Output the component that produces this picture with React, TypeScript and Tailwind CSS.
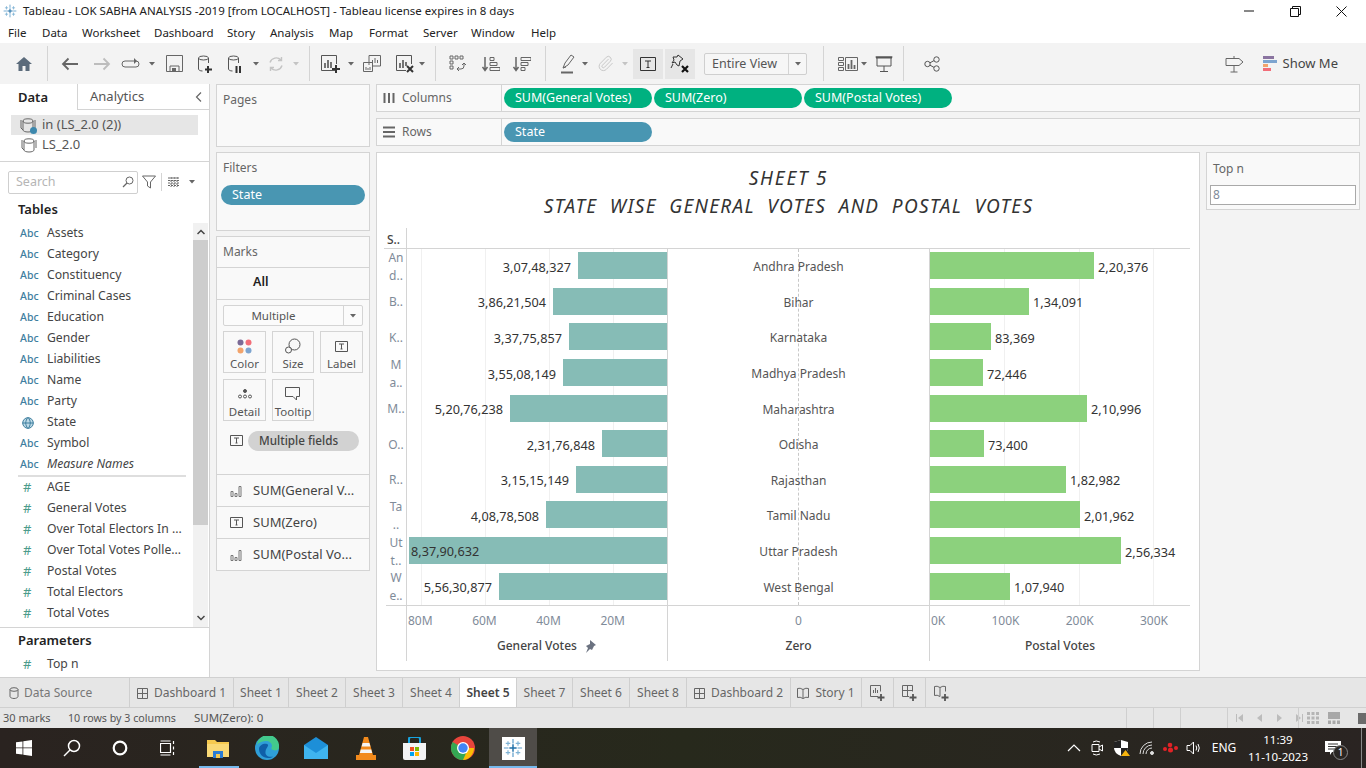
import React from "react";
import { Paperclip } from "lucide-react";

const S = ({ w = 20, h = 20, vb, children, c = "" }: { w?: number; h?: number; vb?: string; children: React.ReactNode; c?: string }) => (
  <svg width={w} height={h} viewBox={vb ?? `0 0 ${w} ${h}`} fill="none" stroke="currentColor" className={"shrink-0 " + c}>{children}</svg>
);

const Logo = ({ size = 14 }: { size?: number }) => (
  <svg width={size} height={size} viewBox="0 0 22 22" className="shrink-0" fill="none" strokeWidth="1.3">
    <path d="M11 1v5M11 16v5M1 11h5M16 11h5" stroke="#5a9bc9" />
    <path d="M11 7v8M7 11h8" stroke="#1f6fa8" strokeWidth="1.6" />
    <path d="M5.500 3.500v5M3 6h5M16.500 3.500v5M14 6h5M5.500 13.500v5M3 16h5M16.500 13.500v5M14 16h5" stroke="#7fb3d5" />
  </svg>
);

const Caret = ({ light }: { light?: boolean }) => (
  <svg width="6" height="4" viewBox="0 0 6 4" className="shrink-0"><path d="M0 0h6L3 3.500z" fill={light ? "#c4c4c4" : "#666"} /></svg>
);

const Slot = ({ w, children, c = "" }: { w: number; children?: React.ReactNode; c?: string }) => (
  <div style={{ width: w }} className={"flex items-center justify-center shrink-0 " + c}>{children}</div>
);
const Div = () => <div className="w-px h-[35px] bg-[#d4d4d4] shrink-0" />;

const Cyl = ({ children }: { children?: React.ReactNode }) => (
  <S w={18} h={20} c="text-[#555]">
    <ellipse cx="6.500" cy="4" rx="5" ry="2" />
    <path d="M1.500 4v11c0 1 1.500 2 4 2M11.500 4v5" />
    {children}
  </S>
);

const Toolbar = () => (
  <div className="h-[41px] bg-[#f3f3f3] flex items-center shrink-0 text-[#666]">
    <Slot w={47}><S w={18} h={16}><path d="M9 1L1 8h2.500v7h4v-5h3v5h4V8H17z" fill="#5b6b7b" stroke="none" /></S></Slot>
    <Div />
    <Slot w={44}><S w={18} h={14} c="text-[#666]"><path d="M17 7H2M7.500 1.500L2 7l5.500 5.500" strokeWidth="1.800" /></S></Slot>
    <Slot w={20}><S w={18} h={14} c="text-[#bdbdbd]"><path d="M1 7h15M10.500 1.500L16 7l-5.500 5.500" strokeWidth="1.800" /></S></Slot>
    <Slot w={37}><S w={20} h={12} c="text-[#666]"><path d="M13 3H4Q1 3 1 6t3 3h11q3 0 3-3t-3-3" /><path d="M13 0v6l3-3z" fill="#666" stroke="none" /></S></Slot>
    <Slot w={6}><Caret /></Slot>
    <Slot w={38}><S w={17} h={17}><path d="M.500.500h16v16H.500z" /><path d="M4 16v-5h9v5" /><path d="M6 13h4v3H6z" fill="#666" stroke="none" /></S></Slot>
    <Slot w={26}><Cyl><path d="M11 12v7M8 15.500h7" stroke="#333" strokeWidth="2" /></Cyl></Slot>
    <Slot w={34}><Cyl><path d="M9.500 12v7M13 12v7" stroke="#333" strokeWidth="2" /></Cyl></Slot>
    <Slot w={6}><Caret /></Slot>
    <Slot w={34}><S w={16} h={16} c="text-[#c4c4c4]"><path d="M2 6.500A6.500 6.500 0 0 1 13 4M14 9.500A6.500 6.500 0 0 1 3 12M13.500 1v3.500H10M2.500 15v-3.500H6" strokeWidth="1.400" /></S></Slot>
    <Slot w={6}><Caret light /></Slot>
    <Slot w={10} />
    <Div />
    <Slot w={38} c="pl-1"><S w={20} h={18} c="text-[#555]"><path d="M14 15.500H.500V.500h15V9" /><path d="M4 13V8M7 13V5M10 13V7" strokeWidth="1.600" /><path d="M15 10v8M11 14h8" stroke="#333" strokeWidth="2" /></S></Slot>
    <Slot w={6}><Caret /></Slot>
    <Slot w={36}><S w={18} h={18} c="text-[#666]"><path d="M6 10V.500h11.500V11H9" /><path d="M9.500 8V5M12 8V3M14.500 8V5" /><path d="M.500 7.500h9v9h-9zM3 15v-3M5 15v-2M7 15v-3" /></S></Slot>
    <Slot w={29}><S w={18} h={18} c="text-[#555]"><path d="M10 15.500H.500V.500h15V9" /><path d="M4 13V8M7 13V5M10 11V7" strokeWidth="1.600" /><path d="M11 11l6 6M17 11l-6 6" stroke="#333" strokeWidth="2" /></S></Slot>
    <Slot w={6}><Caret /></Slot>
    <Slot w={10} />
    <Div />
    <Slot w={43}><S w={18} h={18} c="text-[#666]"><path d="M1 1h3v3H1zM6 1h3v3H6zM11 1h3v3h-3zM1 6h3v3H1zM1 11h3v3H1z" /><path d="M15 8v3a3 3 0 0 1-3 3H8M10 12l-2 2 2 2M13 10l2-2 2 2" /></S></Slot>
    <Slot w={23}><S w={18} h={16} c="text-[#666]"><path d="M3 1v13M.500 11L3 14.500 5.500 11" strokeWidth="1.500" /><path d="M8 1.500h4v3H8zM8 6.500h7v3H8zM8 11.500h10v3H8z" /></S></Slot>
    <Slot w={40}><S w={18} h={16} c="text-[#666]"><path d="M3 1v13M.500 11L3 14.500 5.500 11" strokeWidth="1.500" /><path d="M8 1.500h10v3H8zM8 6.500h7v3H8zM8 11.500h4v3H8z" /></S></Slot>
    <Slot w={3} />
    <Slot w={1}><Div /></Slot>
    <Slot w={44}><S w={14} h={20} c="text-[#666]"><path d="M2 14L4 9l6-8 3 2-6 8zM2 14l3-1" /><path d="M0 18.500h12" strokeWidth="2" /></S></Slot>
    <Slot w={6} c="-ml-[8px]"><Caret /></Slot>
    <Slot w={34}><Paperclip size={17} strokeWidth={1.3} className="text-[#c4c4c4]" /></Slot>
    <Slot w={6}><Caret light /></Slot>
    <div className="w-[30px] h-[30px] bg-[#e6e6e6] ml-[5px] flex items-center justify-center shrink-0">
      <S w={16} h={14} c="text-[#333]"><path d="M.500.500h15v13H.500z" /><path d="M5 4h6M8 4v6.500M6.500 10.500h3" /></S>
    </div>
    <div className="w-[30px] h-[30px] bg-[#e6e6e6] ml-[2px] flex items-center justify-center shrink-0">
      <S w={20} h={20} c="text-[#333]"><path d="M8 1l5 4-3 2-1 5-2-1-2-3-3 1 2-3-1-3 4 0zM3 10L1 14" /><path d="M12 12l6 6M18 12l-6 6" stroke="#111" strokeWidth="2.200" /></S>
    </div>
    <div className="w-[103px] h-[22px] ml-[9px] border border-[#cfcfcf] rounded-[2px] bg-[#f6f6f6] flex items-center shrink-0">
      <span className="w-[84px] pl-[7px] text-[12.500px] text-[#555] border-r border-[#d4d4d4] leading-[20px]">Entire View</span>
      <span className="flex-1 flex justify-center"><Caret /></span>
    </div>
    <Slot w={16} />
    <Div />
    <Slot w={39} c="pl-[8px]"><S w={20} h={14} c="text-[#666]"><path d="M.500.500h5v3h-5zM.500 5.500h5v3h-5zM.500 10.500h5v3h-5zM7.500.500h12v13h-12z" /><path d="M10.500 12V7M13.500 12V3M16.500 12V8" strokeWidth="1.800" /></S></Slot>
    <Slot w={6} c="-ml-[2px]"><Caret /></Slot>
    <Slot w={38} c="-ml-[2px]"><S w={18} h={16} c="text-[#555]"><path d="M.500 1h17M2 1v9h14V1M9 10v5.500M5 15.500h8" /><path d="M1 1.500h16" strokeWidth="2" /></S></Slot>
    <Slot w={1}><Div /></Slot>
    <Slot w={46} c="pl-[10px]"><S w={16} h={16} c="text-[#555]"><circle cx="3.500" cy="8" r="2.700" /><circle cx="12.500" cy="3.500" r="2.700" /><circle cx="12.500" cy="12.500" r="2.700" /><path d="M6 6.800l4-2.200M6 9.200l4 2.200" /></S></Slot>
    <div className="flex-1" />
    <Slot w={20}><S w={19} h={18} c="text-[#666]"><path d="M1 3.500h13l4 3.500-4 3.500H1zM9 3.500V1M9 10.500V17M5.500 17h7" /></S></Slot>
    <div className="w-[18px] shrink-0" />
    <svg width="15" height="16" viewBox="0 0 15 16" className="shrink-0"><path d="M0 0h11v3H0z" fill="#8a74a0" /><path d="M0 4h14v3H0z" fill="#7da4cf" /><path d="M0 8h5v3H0z" fill="#f2a36b" /><path d="M0 12h8v3H0z" fill="#f26d78" /></svg>
    <span className="ml-[5px] mr-[28px] text-[13px] text-[#444]">Show Me</span>
  </div>
);

type F = [string, "a" | "g" | "n", boolean?];
const fields: F[] = [
  ["Assets", "a"], ["Category", "a"], ["Constituency", "a"], ["Criminal Cases", "a"], ["Education", "a"], ["Gender", "a"],
  ["Liabilities", "a"], ["Name", "a"], ["Party", "a"], ["State", "g"], ["Symbol", "a"], ["Measure Names", "a", true],
];
const measures = ["AGE", "General Votes", "Over Total Electors In ...", "Over Total Votes Polle...", "Postal Votes", "Total Electors", "Total Votes"];

const FieldRow = ({ icon, name, italic }: { icon: React.ReactNode; name: string; italic?: boolean }) => (
  <div className="h-[21px] flex items-center">
    <div className="w-[47px] pl-[20px] shrink-0 flex items-center">{icon}</div>
    <span className={"text-[12.200px] text-[#444] whitespace-nowrap " + (italic ? "italic" : "")}>{name}</span>
  </div>
);
const Abc = () => <span className="text-[10.500px] font-medium text-[#3f7f9f]">Abc</span>;
const HashI = () => <span className="ml-[3px] text-[13px] text-[#4b9b8b] leading-none">#</span>;
const Globe = () => <S w={12} h={12} c="ml-[2px] text-[#3f7f9f]"><circle cx="6" cy="6" r="5.300" fill="#bcd9e6" /><path d="M.500 6h11M6 .500c-3 3-3 8 0 11c3-3 3-8 0-11" /></S>;

const DsIcon = ({ check }: { check?: boolean }) => (
  <div className="relative w-[16px] h-[16px] shrink-0">
    <S w={16} h={16} c="text-[#666]"><ellipse cx="8" cy="4" rx="5" ry="2.200" /><path d="M3 4v9c0 1 2 2 5 2s5-1 5-2V4M1 3v8l2 2M15 3v8" /></S>
    {check && <span className="absolute -right-[1px] -bottom-[1px] w-[7px] h-[7px] rounded-full bg-[#3d88ad]" />}
  </div>
);

const LeftPanel = () => (
  <div className="w-[210px] shrink-0 bg-white border-r border-[#d4d4d4] flex flex-col">
    <div className="h-[26px] flex shrink-0">
      <div className="w-[77px] pl-[18px] pt-[1px] text-[13px] font-semibold text-[#222] flex items-center">Data</div>
      <div className="flex-1 border-l border-b border-[#d4d4d4] flex items-center pl-[12px] pt-[1px] text-[13px] text-[#555] justify-between pr-[7px]">
        <span>Analytics</span>
        <S w={7} h={10} c="text-[#666]"><path d="M6 .500L1.500 5 6 9.500" strokeWidth="1.200" /></S>
      </div>
    </div>
    <div className="h-[52px] border-b border-[#d4d4d4] shrink-0 pt-[5px]">
      <div className="ml-[11px] w-[187px] h-[20px] bg-[#e6e6e6] flex items-center pl-[9px] gap-[6px] text-[13px] text-[#555]"><DsIcon check />in (LS_2.0 (2))</div>
      <div className="ml-[11px] w-[187px] h-[20px] flex items-center pl-[10px] gap-[5px] text-[13px] text-[#555]"><DsIcon />LS_2.0</div>
    </div>
    <div className="h-[36px] flex items-center shrink-0 pl-[8px] pt-[4px]">
      <div className="w-[130px] h-[23px] border border-[#cfcfcf] rounded-[2px] flex items-center justify-between pl-[7px] pr-[3px] text-[12.500px] text-[#b5b5b5]">
        Search
        <S w={12} h={12} c="text-[#666]"><circle cx="7.500" cy="4.500" r="3.500" /><path d="M5 7L1 11" strokeWidth="1.300" /></S>
      </div>
      <S w={14} h={14} c="ml-[4px] text-[#666]"><path d="M.500 1h13L8.500 7v6l-3-2V7z" /></S>
      <div className="w-px h-[18px] bg-[#d4d4d4] ml-[5px]" />
      <S w={12} h={10} c="ml-[6px] text-[#666]"><path d="M0 1h12M0 3.500h12M0 6h12M0 8.500h12M3 0v10M6 0v10M9 0v10" strokeDasharray="2 1" /></S>
      <div className="ml-[9px]"><Caret /></div>
    </div>
    <div className="pl-[18px] h-[23px] flex items-center text-[13px] font-semibold text-[#222] shrink-0">Tables</div>
    <div className="relative mt-[2px] h-[405px] border-b border-[#d4d4d4] shrink-0 overflow-hidden">
      <div className="absolute right-[1px] top-0 bottom-0 w-[15px] flex flex-col bg-[#f1f1f1]">
        <div className="h-[17px] flex items-center justify-center shrink-0"><S w={8} h={6} c="text-[#444]"><path d="M.500 5L4 1.500 7.500 5" strokeWidth="1.500" /></S></div>
        <div className="h-[285px] bg-[#cdcdcd] shrink-0" />
        <div className="flex-1" />
        <div className="h-[18px] flex items-center justify-center shrink-0"><S w={8} h={6} c="text-[#444]"><path d="M.500 1L4 4.500 7.500 1" strokeWidth="1.500" /></S></div>
      </div>
      <div>
        {fields.map(([n, t, it]) => <FieldRow key={n} name={n} italic={it} icon={t === "g" ? <Globe /> : <Abc />} />)}
        <div className="h-[2px] mx-[18px] w-[168px] bg-[#dedede]" />
        {measures.map((n) => <FieldRow key={n} name={n} icon={<HashI />} />)}
      </div>
    </div>
    <div className="pl-[18px] h-[24px] mt-[1px] flex items-center text-[13px] font-semibold text-[#222] shrink-0">Parameters</div>
    <div className="mt-[1px]"><FieldRow name="Top n" icon={<HashI />} /></div>
  </div>
);

const Card = ({ title, c = "", children }: { title?: string; c?: string; children?: React.ReactNode }) => (
  <div className={"border border-[#d4d4d4] bg-[#f9f9f9] shrink-0 " + c}>
    {title && <div className="pl-[6px] h-[30px] flex items-center text-[12px] text-[#666]">{title}</div>}
    {children}
  </div>
);

const MarkBtn = ({ label, narrow, children }: { label: string; narrow?: boolean; children: React.ReactNode }) => (
  <div className={(narrow ? "w-[42px]" : "w-[43px]") + " h-[42px] border border-[#d4d4d4] flex flex-col items-center justify-between pt-[4px] pb-[1px] text-[11.500px] text-[#555]"}>
    <div className="h-[20px] flex items-center">{children}</div>
    <span className="leading-[15px]">{label}</span>
  </div>
);
const BarsI = () => <S w={12} h={12} c="text-[#777]"><path d="M1 6.500h2v5H1zM5 8.500h2v3H5zM9 1.500h2v10H9z" /></S>;
const TBox = ({ c = "" }: { c?: string }) => <S w={13} h={11} c={"text-[#555] " + c}><path d="M.500.500h12v10H.500z" /><path d="M4 3h5M6.500 3v5M5.500 8h2" /></S>;

const MarkRow = ({ icon, name }: { icon: React.ReactNode; name: string }) => (
  <div className="h-[32px] border-t border-[#d4d4d4] flex items-center text-[13px] text-[#444]">
    <div className="w-[36px] flex justify-center pl-[2px] shrink-0">{icon}</div>{name}
  </div>
);

const MiddleCol = () => (
  <div className="w-[154px] shrink-0 flex flex-col gap-[5px] ml-[6px]">
    <Card title="Pages" c="h-[63px]" />
    <Card title="Filters" c="h-[79px]">
      <div className="mt-[2px] mx-[4px] h-[20px] rounded-full bg-[#4996b2] text-white text-[12.500px] pl-[11px] flex items-center">State</div>
    </Card>
    <Card title="Marks" c="h-[335px]">
      <div className="h-[33px] border-y border-[#d4d4d4] flex items-center pb-[2px] pl-[36px] text-[12.500px] font-semibold text-[#222]">All</div>
      <div className="mx-[6px] mt-[5px] w-[140px] h-[21px] border border-[#d4d4d4] rounded-[2px] flex items-center bg-[#fbfbfb]">
        <span className="w-[120px] pr-[20px] text-center border-r border-[#d4d4d4] text-[11.500px] text-[#555] leading-[19px]">Multiple</span>
        <span className="flex-1 flex justify-center"><Caret /></span>
      </div>
      <div className="ml-[6px] mt-[5px] flex flex-wrap gap-[6px] w-[141px]">
        <MarkBtn label="Color"><svg width="15" height="15" viewBox="0 0 15 15"><circle cx="3.500" cy="3.500" r="3" fill="#7b6a96" /><circle cx="11.500" cy="3.500" r="3" fill="#f26d78" /><circle cx="3.500" cy="11.500" r="3" fill="#f2a36b" /><circle cx="11.500" cy="11.500" r="3" fill="#7da4cf" /></svg></MarkBtn>
        <MarkBtn label="Size" narrow><S w={16} h={16} c="text-[#555]"><circle cx="9.500" cy="6.500" r="5.500" /><circle cx="3.500" cy="12" r="3" fill="#f9f9f9" /></S></MarkBtn>
        <MarkBtn label="Label"><TBox /></MarkBtn>
        <MarkBtn label="Detail"><S w={14} h={10} c="text-[#555]"><circle cx="7" cy="2" r="1.500" fill="#555" /><circle cx="2" cy="7.500" r="1.500" /><circle cx="7" cy="7.500" r="1.500" /><circle cx="12" cy="7.500" r="1.500" /></S></MarkBtn>
        <MarkBtn label="Tooltip" narrow><S w={16} h={14} c="text-[#555]"><path d="M.500.500h14v9h-3v3.500l-3.500-3.500h-7.500z" /></S></MarkBtn>
      </div>
      <div className="mt-[9px] flex items-center pl-[13px] h-[21px]">
        <TBox />
        <div className="ml-[5px] w-[111px] h-[20px] rounded-full bg-[#d2d2d2] pl-[11px] flex items-center text-[11.700px] font-medium text-[#444]">Multiple fields</div>
      </div>
      <div className="h-[23px]" />
      <MarkRow icon={<BarsI />} name="SUM(General V..." />
      <MarkRow icon={<TBox />} name="SUM(Zero)" />
      <MarkRow icon={<BarsI />} name="SUM(Postal Vo..." />
    </Card>
  </div>
);

const rows: { lab: string[]; st: string; g: string; gl: number; p: string; pr: number }[] = [
  { lab: ["An", "d.."], st: "Andhra Pradesh", g: "3,07,48,327", gl: 89, p: "2,20,376", pr: 164 },
  { lab: ["B.."], st: "Bihar", g: "3,86,21,504", gl: 114, p: "1,34,091", pr: 99 },
  { lab: ["K.."], st: "Karnataka", g: "3,37,75,857", gl: 98, p: "83,369", pr: 61 },
  { lab: ["M", "a.."], st: "Madhya Pradesh", g: "3,55,08,149", gl: 104, p: "72,446", pr: 53 },
  { lab: ["M.."], st: "Maharashtra", g: "5,20,76,238", gl: 157, p: "2,10,996", pr: 157 },
  { lab: ["O.."], st: "Odisha", g: "2,31,76,848", gl: 65, p: "73,400", pr: 54 },
  { lab: ["R.."], st: "Rajasthan", g: "3,15,15,149", gl: 91, p: "1,82,982", pr: 136 },
  { lab: ["Ta", ".."], st: "Tamil Nadu", g: "4,08,78,508", gl: 121, p: "2,01,962", pr: 150 },
  { lab: ["Ut", "t.."], st: "Uttar Pradesh", g: "8,37,90,632", gl: 258, p: "2,56,334", pr: 191 },
  { lab: ["W", "e.."], st: "West Bengal", g: "5,56,30,877", gl: 168, p: "1,07,940", pr: 80 },
];

const Grid = ({ x }: { x: number }) => <div style={{ left: x }} className="absolute top-0 bottom-0 w-px bg-[#f0f0f0]" />;

const Chart = () => (
  <div className="w-[824px] h-[519px] border border-[#d4d4d4] bg-white shrink-0 flex flex-col text-[#333]">
    <div className="h-[75px] flex flex-col items-center pt-[11px] shrink-0 text-[19px] italic text-[#333] leading-[28px] whitespace-pre">
      <div className="ml-[1px] tracking-[1.800px]">SHEET 5</div>
      <div className="ml-[1px] tracking-[1.300px]">STATE  WISE  GENERAL  VOTES  AND  POSTAL  VOTES</div>
    </div>
    <div className="h-[20px] flex shrink-0">
      <div className="ml-[10px] w-[19px] text-[12px] font-medium text-[#444] leading-[24px]">S..</div>
      <div className="w-px bg-[#d4d4d4]" />
    </div>
    <div className="h-px ml-[7px] w-[806px] bg-[#d4d4d4] shrink-0" />
    <div className="flex h-[356px] shrink-0">
      <div className="ml-[9px] w-[20px] flex flex-col shrink-0">
        {rows.map((r) => (
          <div key={r.st} className="h-[35.600px] flex flex-col justify-center items-center text-[12px] leading-[18px] text-[#7f8b99]">
            {r.lab.map((l) => <span key={l}>{l}</span>)}
          </div>
        ))}
      </div>
      <div className="w-px bg-[#d4d4d4]" />
      <div className="relative w-[260px] shrink-0 flex flex-col">
        <Grid x={14} /><Grid x={78} /><Grid x={142} /><Grid x={206} />
        {rows.map((r) => (
          <div key={r.st} className="relative h-[35.600px] flex items-center justify-end text-[12.700px] text-[#333]">
            {r.gl > 200 ? <span className="absolute left-[4px]">{r.g}</span> : <span className="mr-[7px] pt-[1px]">{r.g}</span>}
            <div style={{ width: r.gl }} className="h-[27px] -mt-[2px] bg-[#86bcb6] shrink-0" />
          </div>
        ))}
      </div>
      <div className="w-px bg-[#d4d4d4]" />
      <div className="relative w-[261px] shrink-0 flex flex-col">
        <div className="absolute left-[130px] top-0 bottom-0 border-l border-dashed border-[#c8c8c8]" />
        {rows.map((r) => (
          <div key={r.st} className="relative h-[35.600px] flex items-center justify-center pt-[1px] text-[12px] text-[#555]">{r.st}</div>
        ))}
      </div>
      <div className="w-px bg-[#d4d4d4]" />
      <div className="relative w-[260px] shrink-0 flex flex-col">
        <Grid x={74} /><Grid x={149} /><Grid x={223} />
        {rows.map((r) => (
          <div key={r.st} className="relative h-[35.600px] flex items-center text-[12.700px] text-[#333]">
            <div style={{ width: r.pr }} className="h-[27px] -mt-[2px] bg-[#8cd17d] shrink-0" />
            <span className="ml-[4px] pt-[1px]">{r.p}</span>
          </div>
        ))}
      </div>
    </div>
    <div className="h-px ml-[9px] w-[804px] bg-[#d4d4d4] shrink-0" />
    <div className="flex h-[55px] shrink-0">
      <div className="ml-[29px] w-px bg-[#d4d4d4]" />
      <div className="w-[260px] shrink-0 flex flex-col">
        <div className="h-[29px] relative flex items-center justify-between pl-[1px] pr-[42px] text-[12px] text-[#7f8b99]">
          <span>80M</span><span>60M</span><span>40M</span><span>20M</span>
        </div>
        <div className="flex items-center gap-[6px] pl-[90px] text-[12px] font-medium text-[#444] h-[22px]">
          General Votes
          <S w={13} h={13}><path d="M7 0l6 5-2 1-2 4-2-1-4 4 2-5-2-2 4-2z" fill="#6b7280" stroke="none" /></S>
        </div>
      </div>
      <div className="w-px bg-[#d4d4d4]" />
      <div className="w-[261px] shrink-0 flex flex-col">
        <div className="h-[29px] flex items-center justify-center text-[12px] text-[#7f8b99]">0</div>
        <div className="flex items-center justify-center text-[12px] font-medium text-[#444] h-[22px]">Zero</div>
      </div>
      <div className="w-px bg-[#d4d4d4]" />
      <div className="w-[260px] shrink-0 flex flex-col">
        <div className="h-[29px] relative flex items-center justify-between pl-[1px] pr-[22px] text-[12px] text-[#7f8b99]">
          <span>0K</span><span>100K</span><span>200K</span><span>300K</span>
        </div>
        <div className="flex items-center justify-center text-[12px] font-medium text-[#444] h-[22px]">Postal Votes</div>
      </div>
    </div>
  </div>
);

const Pill = ({ children }: { children: React.ReactNode }) => (
  <div className="w-[148px] h-[20px] rounded-full bg-[#00b180] text-white text-[12.500px] pl-[11px] flex items-center whitespace-nowrap shrink-0">{children}</div>
);

const Shelf = ({ label, icon, children }: { label: string; icon: React.ReactNode; children: React.ReactNode }) => (
  <div className="w-[984px] h-[28px] border border-[#d4d4d4] bg-[#f9f9f9] flex items-center shrink-0">
    <div className="w-[125px] h-full border-r border-[#d4d4d4] flex items-center pl-[6px] gap-[7px] text-[12px] text-[#666] shrink-0">{icon}{label}</div>
    <div className="flex gap-[2px] pl-[2px]">{children}</div>
  </div>
);

type TabT = { t: string; w: number; icon?: "d" | "s" };
const tabs: TabT[] = [
  { t: "Dashboard 1", w: 104, icon: "d" }, { t: "Sheet 1", w: 55 }, { t: "Sheet 2", w: 57 }, { t: "Sheet 3", w: 57 }, { t: "Sheet 4", w: 57 },
];
const tabs2: TabT[] = [
  { t: "Sheet 7", w: 56 }, { t: "Sheet 6", w: 57 }, { t: "Sheet 8", w: 57 }, { t: "Dashboard 2", w: 104, icon: "d" }, { t: "Story 1", w: 71, icon: "s" },
];
const DashI = () => <S w={11} h={11} c="text-[#666]"><path d="M.500.500h10v10H.500zM5.500.500v10M.500 5.500h10" /></S>;
const StoryI = () => <S w={12} h={12} c="text-[#666]"><path d="M6 2.500Q3 .500.500 1.500v9Q3 9.500 6 11.500 9 9.500 11.500 10.500v-9Q9 .500 6 2.500zM6 2.500v9" /></S>;
const Tab = ({ t, w, icon }: TabT) => (
  <div style={{ width: w }} className="h-full border-r border-[#cfcfcf] flex items-center justify-center gap-[6px] pt-[1px] text-[12px] text-[#666] shrink-0 whitespace-nowrap">
    {icon === "d" && <DashI />}{icon === "s" && <StoryI />}{t}
  </div>
);
const Plus = () => <path d="M11 9v7M7.500 12.500h7" stroke="#555" strokeWidth="1.800" />;

const Tabs = () => (
  <div className="h-[31px] bg-[#e6e6e6] border-y border-[#d0d0d0] flex shrink-0">
    <div className="w-[130px] h-full border-r border-[#cfcfcf] flex items-center pl-[9px] gap-[5px] pt-[1px] text-[12px] text-[#777] shrink-0">
      <S w={10} h={12} c="text-[#666]"><ellipse cx="5" cy="2.500" rx="4" ry="1.800" /><path d="M1 2.500v7c0 1 2 2 4 2s4-1 4-2v-7" /></S>
      Data Source
    </div>
    {tabs.map((t) => <Tab key={t.t} {...t} />)}
    <div className="w-[57px] h-full bg-white border-r border-[#cfcfcf] flex items-center justify-center pt-[1px] text-[12px] font-semibold text-[#444] shrink-0">Sheet 5</div>
    {tabs2.map((t) => <Tab key={t.t} {...t} />)}
    <div className="w-[32px] h-full border-r border-[#cfcfcf] flex items-center justify-center"><S w={16} h={16} c="text-[#666]"><path d="M8 11.500H.500V.500h10v6" /><path d="M3.500 8V5M5.500 8V3M7.500 8V5" /><Plus /></S></div>
    <div className="w-[32px] h-full border-r border-[#cfcfcf] flex items-center justify-center"><S w={16} h={16} c="text-[#666]"><path d="M7 11.500H.500V.500h10v6M5.500.500v11M.500 5.500h10" /><Plus /></S></div>
    <div className="w-[32px] h-full flex items-center justify-center"><S w={16} h={16} c="text-[#666]"><path d="M6 2.500Q3 .500.500 1.500v9Q3 9.500 6 11.500M6 2.500Q9 .500 11.500 1.500v5M6 2.500v9" /><Plus /></S></div>
  </div>
);

const Status = () => (
  <div className="h-[20px] bg-[#e6e6e6] flex items-center shrink-0 text-[11px] text-[#555]">
    <span className="w-[65px] ml-[3px]">30 marks</span>
    <span className="w-[126px] text-[10.700px]">10 rows by 3 columns</span>
    <span className="text-[11.500px]">SUM(Zero): 0</span>
    <div className="flex-1" />
    <div className="w-[27px] h-full border-l border-[#cfcfcf]" />
    <div className="w-[27px] h-full border-l border-[#cfcfcf]" />
    <div className="w-[47px] h-full border-l border-[#cfcfcf]" />
    <div className="w-[71px] h-full border-l border-[#cfcfcf] flex items-center pl-[8px] gap-[8px] text-[#bcbcbc]">
      <S w={7} h={8}><path d="M.500 0v8" /><path d="M7 0v8L2 4z" fill="#bcbcbc" stroke="none" /></S>
      <S w={7} h={8} c="ml-[5px]"><path d="M6 0v8L1 4z" fill="#bcbcbc" stroke="none" /></S>
      <S w={7} h={8} c="ml-[5px]"><path d="M1 0v8l5-4z" fill="#bcbcbc" stroke="none" /></S>
      <S w={7} h={8} c="ml-[5px]"><path d="M6.500 0v8" /><path d="M0 0v8l5-4z" fill="#bcbcbc" stroke="none" /></S>
    </div>
    <div className="w-[68px] h-full border-l border-[#cfcfcf] flex items-center pl-[8px] gap-[9px]">
      <S w={12} h={12}><path d="M0 0h3v3H0zM4.500 0h3v3h-3zM9 0h3v3H9zM0 4.500h3v3H0zM4.500 4.500h3v3h-3zM9 4.500h3v3H9zM0 9h3v3H0zM4.500 9h3v3h-3zM9 9h3v3H9z" fill="#b5b5b5" stroke="none" /></S>
      <S w={12} h={12}><path d="M0 0h12v7H0z" fill="#a8a8a8" stroke="none" /><path d="M0 8.500h3V12H0zM4.500 8.500h3V12h-3zM9 8.500h3V12H9z" fill="#a8a8a8" stroke="none" /></S>
      <div className="w-[11px] h-[11px] bg-[#6b6b6b] ml-[9px]" />
    </div>
  </div>
);

const Taskbar = () => (
  <div className="h-[40px] bg-linear-to-r from-[#2a2320] via-[#27291c] to-[#2a2422] flex items-center shrink-0 relative">
    <Slot w={48}><svg width="16" height="16" viewBox="0 0 16 16"><path d="M0 2.300L6.500 1.400v6.100H0zM7.300 1.300L16 0v7.500H7.300zM0 8.300h6.500v6.300L0 13.700zM7.300 8.300H16V16l-8.700-1.200z" fill="#fff" /></svg></Slot>
    <Slot w={48}><S w={18} h={18} c="text-white"><circle cx="11" cy="7" r="5.500" strokeWidth="1.500" /><path d="M7 11l-6 6" strokeWidth="1.500" /></S></Slot>
    <Slot w={48}><S w={16} h={16} c="text-white"><circle cx="8" cy="8" r="6.300" strokeWidth="2.200" /></S></Slot>
    <Slot w={48}><S w={16} h={16} c="text-white"><path d="M.500 3.500h10v9H.500zM.500 1h10M.500 15h10M13.500 1v3M13.500 6.500v3M13.500 12v3" strokeWidth="1.200" /></S></Slot>
    <Slot w={51}><svg width="22" height="19" viewBox="0 0 22 19"><path d="M0 1h8l2 2h12v15H0z" fill="#f5c94f" /><path d="M0 5h22v13H0z" fill="#f9d976" /><path d="M6 12h10v7H6z" fill="#2b7cd3" /><path d="M9 15h4v4H9z" fill="#f5c94f" /></svg></Slot>
    <Slot w={48}><svg width="24" height="24" viewBox="0 0 24 24"><circle cx="12" cy="12" r="12" fill="#2f9fd8" /><path d="M2 9a11 11 0 0 1 22 2c0 3-3 4-6 3s-1-3-1-4c0-3-3-5-6-5S4 6 2 9z" fill="#43c98c" /><path d="M4 13c0 5 4 9 9 9 2 0 4-.500 5-1.500-5 1-8-1-7.500-5S15 9 12 8 4 9 4 13z" fill="#0f5fa8" /></svg></Slot>
    <Slot w={50}><svg width="24" height="22" viewBox="0 0 24 22"><path d="M0 8L12 0l12 8v14H0z" fill="#1d8fd8" /><path d="M0 8l12 8 12-8v14H0z" fill="#3fb4ef" /></svg></Slot>
    <Slot w={49}><svg width="20" height="23" viewBox="0 0 20 23"><path d="M8 0h4l5 18h3v5H0v-5h3z" fill="#f28a1c" /><path d="M6.600 6h6.800l1 3.500H5.600zM4.800 12.500h10.400l1 3.500H3.800z" fill="#f4f4f4" /></svg></Slot>
    <Slot w={49}><svg width="23" height="23" viewBox="0 0 23 23"><path d="M0 6h23v15a2 2 0 0 1-2 2H2a2 2 0 0 1-2-2z" fill="#f4f4f4" /><path d="M6 6V2a2 2 0 0 1 2-2h7a2 2 0 0 1 2 2v4" stroke="#18a4e0" strokeWidth="2" fill="none" /><path d="M7 10h4v4H7z" fill="#f25022" /><path d="M12 10h4v4h-4z" fill="#7fba00" /><path d="M7 15h4v4H7z" fill="#00a4ef" /><path d="M12 15h4v4h-4z" fill="#ffb900" /></svg></Slot>
    <Slot w={48}><svg width="24" height="24" viewBox="0 0 24 24"><circle cx="12" cy="12" r="12" fill="#e8453c" /><path d="M12 24A12 12 0 0 1 1.600 6L12 12h10.700A12 12 0 0 1 12 24z" fill="#34a853" /><path d="M12 24l5.200-12H23a12 12 0 0 1-11 12z" fill="#fbbc05" /><circle cx="12" cy="12" r="6" fill="#fff" /><circle cx="12" cy="12" r="4.700" fill="#4285f4" /></svg></Slot>
    <div className="w-[2px]" />
    <div className="w-[48px] h-full bg-[#4f4c48] flex items-center justify-center shrink-0">
      <div className="w-[23px] h-[23px] bg-white flex items-center justify-center"><Logo size={20} /></div>
    </div>
    <div className="absolute left-[199px] bottom-0 w-[40px] h-[2px] bg-[#76b9ed]" />
    <div className="absolute left-[489px] bottom-0 w-[48px] h-[2px] bg-[#76b9ed]" />
    <div className="flex-1" />
    <S w={14} h={8} c="text-white mr-[5px]"><path d="M1 7l6-6 6 6" strokeWidth="1.200" /></S>
    <Slot w={22}><S w={12} h={16} c="text-white"><path d="M1 4.500h7v7H1zM8 7l3.500-2v6L8 9M2 2q3-2 7 0M2 14q3 2 7 0" /></S></Slot>
    <Slot w={28}><svg width="16" height="16" viewBox="0 0 16 16"><path d="M7 0l7 2v6q0 5-7 8-7-3-7-8V2z" fill="#fff" /><path d="M7 0v8H0V2zM7 8h7q0 5-7 8z" fill="#222" /><path d="M11.500 10l4.500 6H7z" fill="#f6b40e" /></svg></Slot>
    <Slot w={22}><S w={16} h={14} c="text-[#ddd]"><path d="M1 13A12 12 0 0 1 13 1M4 13a9 9 0 0 1 9-9M7 13a6 6 0 0 1 6-6" /><circle cx="13" cy="12" r="1.500" fill="#ddd" /></S></Slot>
    <Slot w={24}><svg width="15" height="12" viewBox="0 0 15 12"><g fill="#e22226"><circle cx="7" cy="3" r="2.300" /><circle cx="2" cy="7" r="2" /><circle cx="7.500" cy="8" r="2.500" /><circle cx="13" cy="6" r="2" /></g></svg></Slot>
    <Slot w={24}><S w={16} h={14} c="text-white"><path d="M1 4.500h3L7.500 1v12L4 9.500H1zM10 4.500q1.500 2.500 0 5M12 3q2.500 4 0 8" /></S></Slot>
    <span className="w-[36px] text-center text-[12px] text-white">ENG</span>
    <div className="w-[76px] text-center text-[11.500px] text-white leading-[17px] -ml-[2px]">11:39<br />11-10-2023</div>
    <div className="w-[9px]" />
    <div className="relative w-[22px] mr-[19px] shrink-0">
      <svg width="16" height="15" viewBox="0 0 16 15"><path d="M0 0h16v11H7l-2 3v-3H0z" fill="#fff" /><path d="M3 3h10M3 5.500h10M3 8h7" stroke="#333" /></svg>
      <span className="absolute left-[8px] top-[4px] w-[15px] h-[15px] rounded-full bg-[#2a2623] border border-[#888] text-white text-[10px] leading-[13px] text-center">1</span>
    </div>
    <div className="absolute right-[4px] top-0 h-[40px] w-px bg-[#888]" />
  </div>
);

export default function App() {
  return (
    <div className="w-[1366px] h-[768px] overflow-hidden flex flex-col bg-white" style={{ fontFamily: '"Noto Sans", "Open Sans", sans-serif' }}>
      <div className="h-[22px] flex items-center pl-[3px] gap-[6px] text-[11.500px] text-[#222] shrink-0 relative">
        <Logo size={14} />
        <span className="whitespace-nowrap">Tableau - LOK SABHA ANALYSIS -2019 [from LOCALHOST] - Tableau license expires in 8 days</span>
        <div className="flex-1" />
        <div className="flex items-center">
          <S w={10} h={10} c="text-[#111]"><path d="M0 5h10" /></S>
          <S w={11} h={11} c="text-[#111] ml-[36px]"><path d="M.500 2.500h8v8h-8zM2.500 2.500v-2h8v8h-2" /></S>
          <S w={11} h={11} c="text-[#111] ml-[35px] mr-[19px]"><path d="M.500.500l10 10M10.500.500l-10 10" /></S>
        </div>
      </div>
      <div className="h-[21px] flex items-center pl-[8px] text-[11.500px] text-[#222] shrink-0">
        {[["File", 34], ["Data", 40], ["Worksheet", 72], ["Dashboard", 73], ["Story", 43], ["Analysis", 59], ["Map", 40], ["Format", 54], ["Server", 48], ["Window", 60], ["Help", 40]].map(([t, w]) => (
          <span key={t as string} style={{ width: w as number }}>{t}</span>
        ))}
      </div>
      <Toolbar />
      <div className="h-[593px] flex bg-[#f3f3f3] shrink-0">
        <LeftPanel />
        <MiddleCol />
        <div className="ml-[6px] w-[990px] flex flex-col shrink-0">
          <div className="flex flex-col gap-[6px]">
            <Shelf label="Columns" icon={<S w={12} h={12} c="text-[#666]"><path d="M1.500 1v10M6 1v10M10.500 1v10" strokeWidth="2" /></S>}>
              <Pill>SUM(General Votes)</Pill><Pill>SUM(Zero)</Pill><Pill>SUM(Postal Votes)</Pill>
            </Shelf>
            <Shelf label="Rows" icon={<S w={12} h={12} c="text-[#666]"><path d="M0 1.500h12M0 6h12M0 10.500h12" strokeWidth="2" /></S>}>
              <div className="w-[148px] h-[20px] rounded-full bg-[#4996b2] text-white text-[12.500px] pl-[11px] flex items-center shrink-0">State</div>
            </Shelf>
          </div>
          <div className="flex mt-[6px]">
            <Chart />
            <div className="ml-[6px] w-[154px] h-[58px] border border-[#d4d4d4] bg-[#f9f9f9] shrink-0 px-[3px]">
              <div className="pl-[3px] h-[32px] flex items-center text-[12px] text-[#666]">Top n</div>
              <div className="h-[20px] border border-[#a9a9a9] bg-white text-[12px] text-[#7f8b99] pl-[2px] leading-[18px]">8</div>
            </div>
          </div>
        </div>
      </div>
      <Tabs />
      <Status />
      <Taskbar />
    </div>
  );
}
